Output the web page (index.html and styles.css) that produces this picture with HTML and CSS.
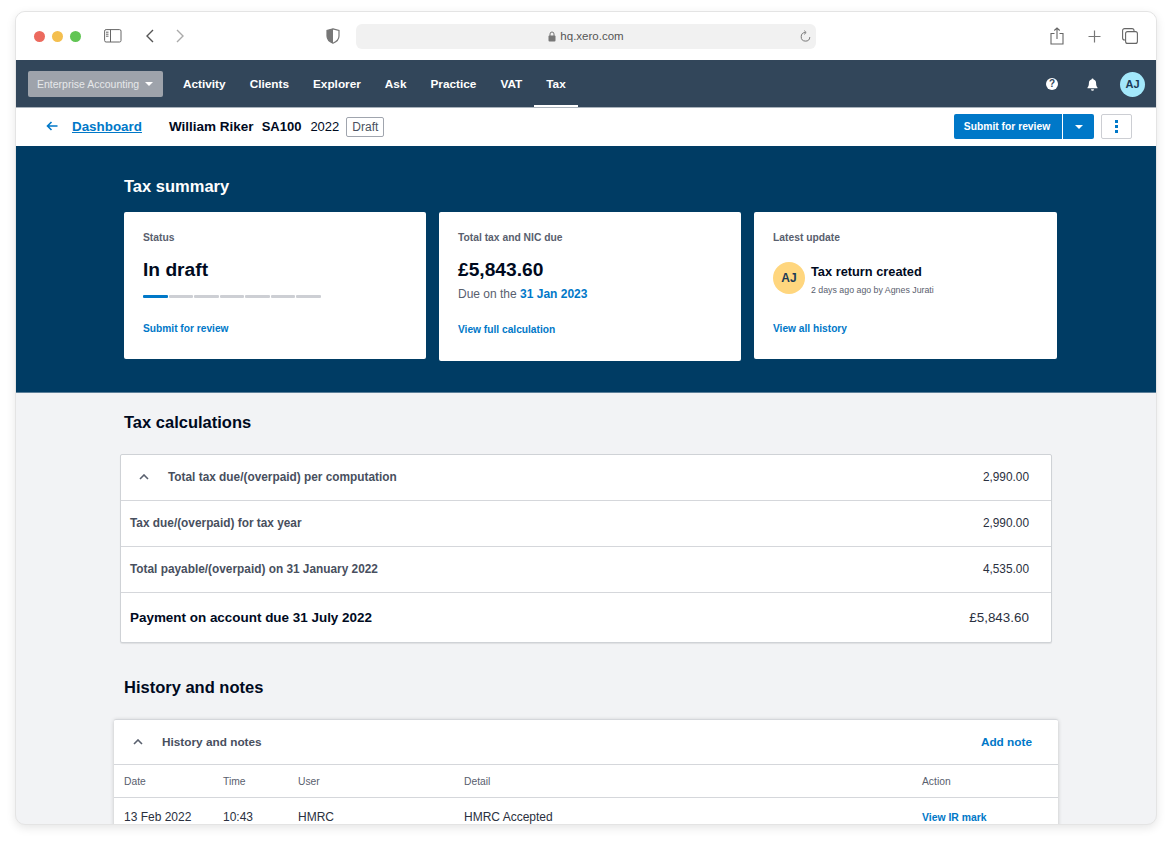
FILE: index.html
```html
<!DOCTYPE html>
<html lang="en">
<head>
    <meta charset="UTF-8">
    <meta name="viewport" content="width=device-width, initial-scale=1.0">
    <title>Tax return - hq.xero.com</title>
    <link rel="stylesheet" href="styles.css">
</head>
<body>
    <div class="window">
        <div class="chrome">
            <div class="lights">
                <span class="light red"></span>
                <span class="light yellow"></span>
                <span class="light green"></span>
            </div>
            <svg class="sidebar-icon" width="18" height="14" viewBox="0 0 18 14" fill="none" stroke="#666">
                <rect x="0.6" y="0.6" width="16.4" height="12.4" rx="1.5"/>
                <path d="M6.5 0.6V13"/>
                <path d="M2 3.2h2.5M2 5.2h2.5M2 7.2h2.5" stroke-width="1"/>
            </svg>
            <svg class="back-icon" width="10" height="14" viewBox="0 0 10 14" fill="none" stroke="#555" stroke-width="1.4">
                <path d="M8 1L2 7l6 6"/>
            </svg>
            <svg class="forward-icon" width="10" height="14" viewBox="0 0 10 14" fill="none" stroke="#aaa" stroke-width="1.4">
                <path d="M2 1l6 6-6 6"/>
            </svg>
            <svg class="shield-icon" width="14" height="16" viewBox="0 0 14 16">
                <path d="M7 0.8L13 2.5V8c0 3.5-2.6 5.8-6 7.2C3.6 13.8 1 11.5 1 8V2.5z" fill="#fff" stroke="#777" stroke-width="1.2"/>
                <path d="M7 0.8V15.2C3.6 13.8 1 11.5 1 8V2.5z" fill="#777"/>
            </svg>
            <div class="address">
                <svg width="8" height="11" viewBox="0 0 8 11">
                    <rect x="0.5" y="4.5" width="7" height="6" rx="1" fill="#777"/>
                    <path d="M2 5V3a2 2 0 0 1 4 0v2" fill="none" stroke="#777"/>
                </svg>
                <span>hq.xero.com</span>
                <svg class="reload" width="11" height="13" viewBox="0 0 11 13" fill="none" stroke="#777">
                    <path d="M5.5 2.5a4.3 4.3 0 1 0 4.3 4.6"/>
                    <path d="M4.2 0.6l2 1.9-2 1.9" stroke-width="0.9"/>
                </svg>
            </div>
            <div class="chrome-right">
                <svg class="share-icon" width="14" height="18" viewBox="0 0 14 18" fill="none" stroke="#666" stroke-width="1.1">
                    <path d="M4.5 6.5H1v10.5h12V6.5H9.5"/>
                    <path d="M7 12V1M4.3 3.5L7 1l2.7 2.5"/>
                </svg>
                <svg width="13" height="13" viewBox="0 0 13 13" fill="none" stroke="#777" stroke-width="1.2">
                    <path d="M6.5 0.5v12M0.5 6.5h12"/>
                </svg>
                <svg width="16" height="16" viewBox="0 0 16 16" fill="none" stroke="#666" stroke-width="1.1">
                    <rect x="3.6" y="3.6" width="11.8" height="11.8" rx="2"/>
                    <path d="M3.6 12H2.6a2 2 0 0 1-2-2V2.6a2 2 0 0 1 2-2H10a2 2 0 0 1 2 2v1"/>
                </svg>
            </div>
        </div>

        <header class="topnav">
            <div class="org">Enterprise Accounting <span class="org-caret"></span></div>
            <nav class="menu">
                <a href="#">Activity</a>
                <a href="#">Clients</a>
                <a href="#">Explorer</a>
                <a href="#">Ask</a>
                <a href="#">Practice</a>
                <a href="#">VAT</a>
                <a href="#" class="active">Tax</a>
            </nav>
            <div class="nav-right">
                <span class="help">?</span>
                <svg width="11" height="13" viewBox="0 0 11 13" fill="#fff">
                    <path d="M5.5 0.5c.6 0 1 .4 1 .9 1.7.4 2.6 1.8 2.6 3.6 0 2.4.5 3.5 1.4 4.5v.7H.5v-.7c.9-1 1.4-2.1 1.4-4.5 0-1.8.9-3.2 2.6-3.6 0-.5.4-.9 1-.9z"/>
                    <path d="M4 11.3h3a1.5 1.5 0 0 1-3 0z"/>
                </svg>
                <span class="avatar-small">AJ</span>
            </div>
        </header>

        <div class="subbar">
            <svg class="arrow-left" width="12" height="10" viewBox="0 0 12 10" fill="none" stroke="#0078c8" stroke-width="1.6">
                <path d="M11.5 5H1.5M5.5 1L1.5 5l4 4"/>
            </svg>
            <a href="#" class="dashboard">Dashboard</a>
            <strong class="client">William Riker</strong>
            <strong class="form-name">SA100</strong>
            <span class="year">2022</span>
            <span class="tag">Draft</span>
            <div class="subbar-actions">
                <div class="split">
                    <button class="split-main">Submit for review</button>
                    <button class="split-caret"><span class="caret-white"></span></button>
                </div>
                <button class="more">
                    <span></span><span></span><span></span>
                </button>
            </div>
        </div>

        <section class="hero">
            <h2>Tax summary</h2>
            <div class="cards">
                <div class="card">
                    <div class="card-label">Status</div>
                    <div class="card-big">In draft</div>
                    <div class="progress">
                        <span class="on"></span><span></span><span></span><span></span><span></span><span></span><span></span>
                    </div>
                    <a href="#" class="card-link status-link">Submit for review</a>
                </div>
                <div class="card card-tall">
                    <div class="card-label">Total tax and NIC due</div>
                    <div class="card-big">£5,843.60</div>
                    <div class="due">Due on the <b>31 Jan 2023</b></div>
                    <a href="#" class="card-link calc-link">View full calculation</a>
                </div>
                <div class="card card-wide">
                    <div class="card-label">Latest update</div>
                    <div class="update">
                        <span class="avatar-big">AJ</span>
                        <div class="update-text">
                            <div class="update-title">Tax return created</div>
                            <div class="update-sub">2 days ago ago by Agnes Jurati</div>
                        </div>
                    </div>
                    <a href="#" class="card-link history-link">View all history</a>
                </div>
            </div>
        </section>

        <main class="content">
            <h2>Tax calculations</h2>
            <div class="calc">
                <div class="calc-row first">
                    <svg class="chev" width="10" height="6" viewBox="0 0 10 6" fill="none" stroke="#59606e" stroke-width="1.6">
                        <path d="M1 5l4-4 4 4"/>
                    </svg>
                    <span class="calc-name">Total tax due/(overpaid) per computation</span>
                    <span class="calc-val">2,990.00</span>
                </div>
                <div class="calc-row">
                    <span class="calc-name">Tax due/(overpaid) for tax year</span>
                    <span class="calc-val">2,990.00</span>
                </div>
                <div class="calc-row">
                    <span class="calc-name">Total payable/(overpaid) on 31 January 2022</span>
                    <span class="calc-val">4,535.00</span>
                </div>
                <div class="calc-row total">
                    <span class="calc-name">Payment on account due 31 July 2022</span>
                    <span class="calc-val">£5,843.60</span>
                </div>
            </div>

            <h2 class="history-title">History and notes</h2>
            <div class="history">
                <div class="history-head">
                    <svg class="chev" width="10" height="6" viewBox="0 0 10 6" fill="none" stroke="#59606e" stroke-width="1.6">
                        <path d="M1 5l4-4 4 4"/>
                    </svg>
                    <span class="calc-name">History and notes</span>
                    <a href="#" class="add-note">Add note</a>
                </div>
                <table class="history-table">
                    <tr>
                        <th class="col-date">Date</th>
                        <th class="col-time">Time</th>
                        <th class="col-user">User</th>
                        <th class="col-detail">Detail</th>
                        <th>Action</th>
                    </tr>
                    <tr>
                        <td>13 Feb 2022</td>
                        <td>10:43</td>
                        <td>HMRC</td>
                        <td>HMRC Accepted</td>
                        <td><a href="#">View IR mark</a></td>
                    </tr>
                </table>
            </div>
        </main>
    </div>
</body>
</html>
```

FILE: styles.css
```css
* {
    margin: 0;
    padding: 0;
    box-sizing: border-box;
}

body {
    background-color: #fff;
    color: #000a1e;
    font-family: "Liberation Sans", Arial, sans-serif;
    height: 844px;
    overflow: hidden;
    padding: 11px 15px 0;
}

a {
    text-decoration: none;
    color: #0078c8;
}

button {
    font-family: inherit;
    border: none;
}


.window {
    height: 814px;
    border: 1px solid #e4e4e4;
    border-radius: 10px;
    overflow: hidden;
    background-color: #f2f3f5;
    box-shadow: 0 3px 10px rgba(0, 0, 0, 0.1);
}


/* browser toolbar */
.chrome {
    height: 48px;
    background-color: #fff;
    display: flex;
    align-items: center;
    padding: 0 18px;
}

.lights {
    display: flex;
    gap: 7px;
}

.light {
    width: 11px;
    height: 11px;
    border-radius: 50%;
}

.red { background-color: #ec6a5e; }
.yellow { background-color: #f4bf4f; }
.green { background-color: #61c554; }

.sidebar-icon {
    margin-left: 23px;
}

.back-icon {
    margin-left: 23px;
}

.forward-icon {
    margin-left: 20px;
}

.shield-icon {
    margin-left: 141px;
}

.address {
    width: 460px;
    height: 25px;
    margin-left: 16px;
    border-radius: 6px;
    background-color: #f1f1f1;
    display: flex;
    align-items: center;
    justify-content: center;
    gap: 4px;
    position: relative;
    font-size: 11.5px;
    color: #555;
}

.reload {
    position: absolute;
    right: 5px;
    top: 6px;
}

.chrome-right {
    margin-left: auto;
    display: flex;
    align-items: center;
    gap: 21px;
}

.share-icon {
    margin-right: 3px;
}


/* app nav */
.topnav {
    height: 48px;
    background-color: #32465a;
    border-bottom: 1px solid #a9b2bb;
    display: flex;
    align-items: center;
    padding: 1px 11px 0 12px;
}

.org {
    width: 135px;
    height: 26px;
    background-color: #9ea3ab;
    border-radius: 2px;
    color: #e6e8ea;
    font-size: 10.5px;
    display: flex;
    align-items: center;
    padding-left: 9px;
    white-space: nowrap;
}

.org-caret {
    margin-left: 6px;
    border-left: 4px solid transparent;
    border-right: 4px solid transparent;
    border-top: 4px solid #fff;
}

.menu {
    display: flex;
    height: 46px;
    margin-left: 8px;
}

.menu a {
    color: #fff;
    font-size: 11.8px;
    font-weight: bold;
    line-height: 46px;
    padding: 0 12px;
}

.menu a.active {
    border-bottom: 2px solid #fff;
}

.nav-right {
    margin-left: auto;
    display: flex;
    align-items: center;
}

.help {
    width: 12px;
    height: 12px;
    border-radius: 50%;
    background-color: #fff;
    color: #32465a;
    font-size: 10px;
    font-weight: bold;
    text-align: center;
    line-height: 12px;
    margin-right: 29px;
}

.avatar-small {
    width: 25px;
    height: 25px;
    margin-left: 22px;
    border-radius: 50%;
    background-color: #a3e8fb;
    color: #1c3a56;
    font-size: 11px;
    font-weight: bold;
    text-align: center;
    line-height: 25px;
}


/* sub header */
.subbar {
    height: 38px;
    background-color: #fff;
    display: flex;
    align-items: center;
    padding: 0 24px 2px 30px;
    font-size: 13px;
}

.dashboard {
    margin-left: 14px;
    font-size: 13.4px;
    font-weight: bold;
    text-decoration: underline;
}

.client {
    margin-left: 27px;
    font-size: 13.5px;
}

.form-name {
    margin-left: 8px;
}

.year {
    margin-left: 9px;
}

.tag {
    margin: 2px 0 0 7px;
    height: 20px;
    padding: 0 5px;
    border: 1px solid #a0a5ae;
    border-radius: 2px;
    font-size: 12px;
    line-height: 19px;
    color: #4a5160;
}

.subbar-actions {
    margin-left: auto;
    display: flex;
    align-items: center;
    gap: 7px;
}

.split {
    display: flex;
    height: 25px;
}

.split button {
    background-color: #0078c8;
    color: #fff;
}

.split-main {
    width: 108px;
    padding-right: 2px;
    font-size: 10.3px;
    font-weight: bold;
    border-radius: 2px 0 0 2px;
}

.split-caret {
    width: 31px;
    margin-left: 1px;
    border-radius: 0 2px 2px 0;
}

.caret-white {
    display: inline-block;
    vertical-align: middle;
    border-left: 4px solid transparent;
    border-right: 4px solid transparent;
    border-top: 4px solid #fff;
}

.more {
    width: 31px;
    height: 25px;
    background-color: #fff;
    border: 1px solid #ccced3;
    border-radius: 2px;
    display: flex;
    flex-direction: column;
    align-items: center;
    justify-content: center;
    gap: 2px;
}

.more span {
    width: 2.5px;
    height: 3px;
    background-color: #0078c8;
}


/* summary */
.hero {
    height: 247px;
    background-color: #003c64;
    border-bottom: 1px solid #5c7f99;
    padding: 29px 0 0 108px;
}

.hero h2 {
    color: #fff;
    font-size: 16.5px;
    line-height: 22px;
}

.cards {
    display: flex;
    align-items: flex-start;
    gap: 13px;
    margin-top: 15px;
}

.card {
    width: 302px;
    height: 147px;
    background-color: #fff;
    border-radius: 2px;
    padding: 19px;
}

.card-tall {
    height: 149px;
}

.card-wide {
    width: 303px;
}

.card-label {
    font-size: 10.3px;
    line-height: 13px;
    font-weight: bold;
    color: #59606e;
}

.card-big {
    font-size: 19.2px;
    line-height: 24px;
    font-weight: bold;
    margin-top: 14px;
}

.progress {
    display: flex;
    gap: 1px;
    width: 178px;
    margin-top: 13px;
}

.progress span {
    flex: 1;
    height: 3px;
    background-color: #cdcfd4;
    border-radius: 1px;
}

.progress span.on {
    background-color: #0078c8;
}

.card-link {
    display: block;
    font-size: 10.2px;
    line-height: 13px;
    font-weight: bold;
}

.status-link {
    margin-top: 24px;
}

.due {
    font-size: 12px;
    line-height: 14px;
    margin-top: 5px;
    color: #59606e;
}

.due b {
    color: #0078c8;
}

.calc-link {
    margin-top: 22px;
}

.update {
    display: flex;
    gap: 6px;
    margin-top: 18px;
}

.avatar-big {
    width: 32px;
    height: 32px;
    border-radius: 50%;
    background-color: #ffd67e;
    color: #1c3a56;
    font-size: 12px;
    font-weight: bold;
    text-align: center;
    line-height: 32px;
}

.update-text {
    padding-top: 2px;
}

.update-title {
    font-size: 12.8px;
    line-height: 16px;
    font-weight: bold;
}

.update-sub {
    font-size: 8.8px;
    line-height: 11px;
    margin-top: 5px;
    color: #59606e;
}

.history-link {
    margin-top: 26px;
}


/* lower part */
.content {
    padding: 0 98px;
}

.content h2 {
    font-size: 16.5px;
    line-height: 22px;
    margin: 18px 0 0 10px;
}

.calc {
    width: 932px;
    margin: 21px 0 0 6px;
    background-color: #fff;
    border: 1px solid #cfd2d6;
    border-radius: 2px;
    box-shadow: 0 1px 1px rgba(0, 0, 0, 0.08);
}

.calc-row {
    height: 46px;
    display: flex;
    align-items: center;
    padding: 0 22px 1px 9px;
    border-bottom: 1px solid #d5d7db;
    font-size: 11.85px;
}

.calc-row.first {
    padding-left: 18px;
}

.calc-row.total {
    height: 49px;
    padding-bottom: 0;
    border-bottom: none;
    font-size: 13.45px;
}

.calc-name {
    font-weight: bold;
    color: #484f5e;
}

.total .calc-name {
    color: #000a1e;
}

.calc-val {
    margin-left: auto;
    color: #2a3040;
}

.first .calc-name {
    margin-left: 19px;
}

.content .history-title {
    margin-top: 33px;
}

.history {
    width: 944px;
    margin-top: 21px;
    background-color: #fff;
    border-top: 1px solid #d5d7db;
    box-shadow: 0 1px 4px rgba(0, 0, 0, 0.2);
    border-radius: 2px;
}

.history-head {
    height: 45px;
    display: flex;
    align-items: center;
    padding: 0 26px 0 19px;
    border-bottom: 1px solid #d5d7db;
    font-size: 11.8px;
}

.history-head .calc-name {
    margin-left: 19px;
}

.add-note {
    margin-left: auto;
    font-size: 11.8px;
    font-weight: bold;
}

.history-table {
    width: 100%;
    border-collapse: collapse;
    table-layout: fixed;
    font-size: 12px;
}

.history-table th {
    height: 32px;
    padding: 1px 0 0 10px;
    font-size: 10.3px;
    font-weight: normal;
    text-align: left;
    color: #59606e;
    border-bottom: 1px solid #d5d7db;
}

.history-table td {
    height: 38px;
    padding: 1px 0 0 10px;
    color: #2a3040;
}

.history-table td a {
    font-size: 10.4px;
    font-weight: bold;
}

.col-date { width: 99px; }
.col-time { width: 75px; }
.col-user { width: 166px; }
.col-detail { width: 458px; }
```
